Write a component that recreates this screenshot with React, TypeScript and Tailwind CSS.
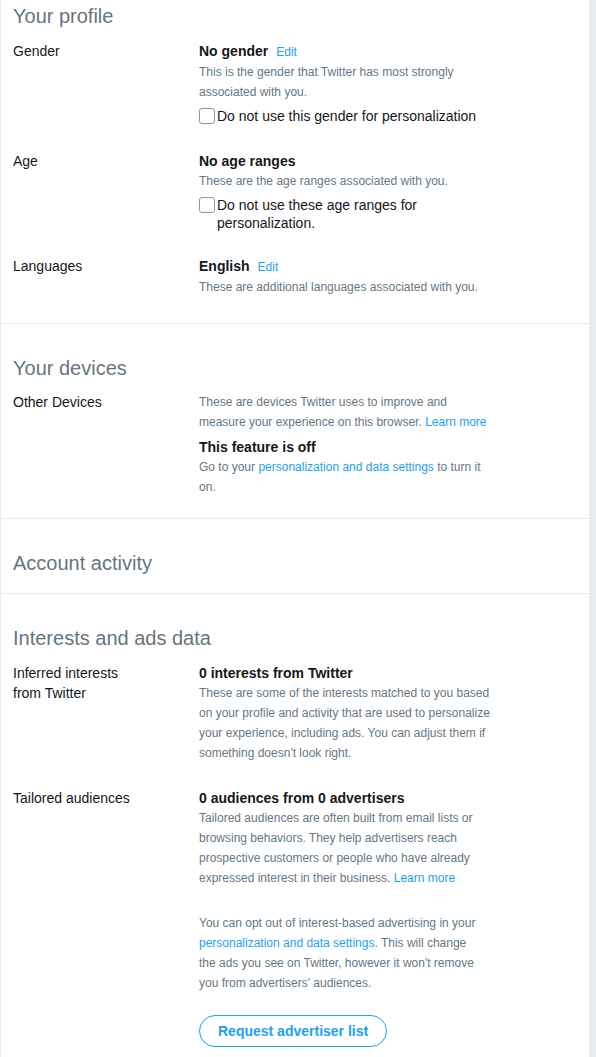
import React from 'react';

const font = { fontFamily: '"Liberation Sans", Arial, Helvetica, sans-serif' };

function Heading({ children, className = 'mb-[13px]' }: { children: React.ReactNode; className?: string }) {
  return <h2 className={`pl-[12px] text-[20px] leading-[24px] font-normal text-[#66757f] ${className}`}>{children}</h2>;
}

interface RowProps {
  label: React.ReactNode;
  children: React.ReactNode;
}

function Row({ label, children }: RowProps) {
  return (
    <div className="flex">
      <div className="w-[198px] shrink-0 pl-[12px] pr-[50px] text-[14px] leading-[20px] text-[#14171a]">{label}</div>
      <div className="w-[297px]">{children}</div>
    </div>
  );
}

function Title({ children, edit }: { children: React.ReactNode; edit?: boolean }) {
  return (
    <div className="text-[14px] leading-[20px] font-bold text-[#14171a]">
      {children}
      {edit && <a className="ml-[8px] text-[12px] font-normal text-[#1da1f2] cursor-pointer">Edit</a>}
    </div>
  );
}

function Desc({ children, className = '' }: { children: React.ReactNode; className?: string }) {
  return <p className={`text-[12px] leading-[20px] text-[#657786] ${className}`}>{children}</p>;
}

function Link({ children }: { children: React.ReactNode }) {
  return <a className="text-[#1da1f2] cursor-pointer">{children}</a>;
}

function Check({ children }: { children: React.ReactNode }) {
  return (
    <label className="mt-[5px] flex items-start text-[14px] leading-[18px] text-[#14171a]">
      <span className="mt-[1px] mr-[2px] h-[16px] w-[16px] shrink-0 rounded-[3px] border border-[#8899a6] bg-white" />
      <span>{children}</span>
    </label>
  );
}

export default function App() {
  return (
    <div className="min-h-screen bg-[#e6ecf0]" style={font}>
      <div className="ml-[1px] w-[588px] min-h-screen bg-white">
        <section className="pt-[4px] pb-[26px] border-b border-[#e6ecf0]">
          <Heading>Your profile</Heading>
          <div className="flex flex-col">
            <div className="mb-[26px]">
              <Row label="Gender">
                <Title edit>No gender</Title>
                <Desc>This is the gender that Twitter has most strongly associated with you.</Desc>
                <Check>Do not use this gender for personalization</Check>
              </Row>
            </div>
            <div className="mb-[24px]">
              <Row label="Age">
                <Title>No age ranges</Title>
                <Desc>These are the age ranges associated with you.</Desc>
                <Check>Do not use these age ranges for personalization.</Check>
              </Row>
            </div>
            <Row label="Languages">
              <Title edit>English</Title>
              <Desc>These are additional languages associated with you.</Desc>
            </Row>
          </div>
        </section>

        <section className="pt-[32px] pb-[21px] border-b border-[#e6ecf0]">
          <Heading className="mb-[12px]">Your devices</Heading>
          <Row label="Other Devices">
            <Desc>
              These are devices Twitter uses to improve and measure your experience on this browser. <Link>Learn more</Link>
            </Desc>
            <div className="mt-[5px]">
              <Title>This feature is off</Title>
            </div>
            <Desc>
              Go to your <Link>personalization and data settings</Link> to turn it on.
            </Desc>
          </Row>
        </section>

        <section className="pt-[32px] pb-[5px] border-b border-[#e6ecf0]">
          <Heading>Account activity</Heading>
        </section>

        <section className="pt-[32px] pb-[20px]">
          <Heading>Interests and ads data</Heading>
          <div className="mt-[1px] flex flex-col gap-[25px]">
            <Row label="Inferred interests from Twitter">
              <Title>0 interests from Twitter</Title>
              <Desc>
                These are some of the interests matched to you based on your profile and activity that are used to personalize your experience, including ads. You can adjust them if something doesn't look right.
              </Desc>
            </Row>
            <Row label="Tailored audiences">
              <Title>0 audiences from 0 advertisers</Title>
              <Desc>
                Tailored audiences are often built from email lists or browsing behaviors. They help advertisers reach prospective customers or people who have already expressed interest in their business. <Link>Learn more</Link>
              </Desc>
              <Desc className="mt-[25px]">
                You can opt out of interest-based advertising in your <Link>personalization and data settings</Link>. This will change
                <br />
                the ads you see on Twitter, however it won't remove you from advertisers' audiences.
              </Desc>
              <button className="mt-[22px] h-[32px] rounded-full border border-[#1da1f2] bg-white px-[18px] text-[14px] font-bold text-[#1da1f2]">
                Request advertiser list
              </button>
            </Row>
          </div>
        </section>
      </div>
    </div>
  );
}
